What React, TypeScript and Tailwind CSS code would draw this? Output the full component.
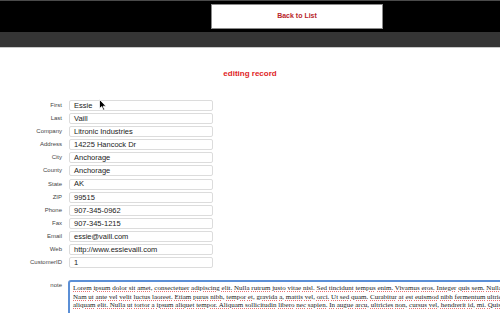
import React from 'react';

const FIELDS: [string, string][] = [
  ['First', 'Essie'],
  ['Last', 'Vaill'],
  ['Company', 'Litronic Industries'],
  ['Address', '14225 Hancock Dr'],
  ['City', 'Anchorage'],
  ['County', 'Anchorage'],
  ['State', 'AK'],
  ['ZIP', '99515'],
  ['Phone', '907-345-0962'],
  ['Fax', '907-345-1215'],
  ['Email', 'essie@vaill.com'],
  ['Web', 'http://www.essievaill.com'],
  ['CustomerID', '1'],
];

const NOTE_LINES = [
  'Lorem ipsum dolor sit amet, consectetuer adipiscing elit. Nulla rutrum justo vitae nisl. Sed tincidunt tempus enim. Vivamus eros. Integer quis sem. Nulla dictum',
  'Nam ut ante vel velit luctus laoreet. Etiam purus nibh, tempor et, gravida a, mattis vel, orci. Ut sed quam. Curabitur at est euismod nibh fermentum ultricies',
  'aliquam elit. Nulla ut tortor a ipsum aliquet tempor. Aliquam sollicitudin libero nec sapien. In augue arcu, ultricies non, cursus vel, hendrerit id, mi. Quisque',
];

function NoteLine({ text }: { text: string }) {
  const words = text.split(' ');
  return (
    <div className="whitespace-nowrap">
      {words.map((w, i) => (
        <React.Fragment key={i}>
          <span className="underline decoration-dotted decoration-[#e87070] underline-offset-1">{w}</span>
          {i < words.length - 1 ? ' ' : ''}
        </React.Fragment>
      ))}
    </div>
  );
}

export default function App() {
  return (
    <div className="relative w-[500px] h-[313px] overflow-hidden bg-white font-['Liberation_Sans',Arial,sans-serif]">
      {/* top bar */}
      <div className="h-[32px] bg-black border-t border-[#4a4a4a] pt-[3px] pl-[211px]">
        <div className="w-[172px] h-[25px] bg-white border border-[#8a8a8a] flex items-center justify-center">
          <span className="text-[7px] font-bold text-[#b8262a]">Back to List</span>
        </div>
      </div>
      <div className="h-[16px] bg-[#353535] border-b border-[#c8c8c8]" />

      <div className="pt-[21px] text-center text-[8px] font-bold text-[#e02424] leading-[10px]">editing record</div>

      {/* form */}
      <div className="mt-[21px] flex flex-col gap-[2.1px]">
        {FIELDS.map(([label, value]) => (
          <div key={label} className="flex items-center">
            <div className="w-[62px] shrink-0 text-right text-[6px] text-[#444]">{label}</div>
            <div className="ml-[7px] w-[144px] h-[11px] border border-[#dcdcdc] rounded-[2px] pl-[4px] flex items-center text-[7.5px] text-[#222]">
              {value}
            </div>
          </div>
        ))}
      </div>

      <div className="mt-[12px] flex items-start">
        <div className="w-[62px] shrink-0 text-right text-[6px] text-[#444] pt-[1px]">note</div>
        <div className="ml-[6px] w-[600px] shrink-0 h-[60px] border-2 border-[#5b8fd6] rounded-[3px] pl-[3px] pt-[2px] text-[7px] leading-[8.5px] text-[#222] font-['Liberation_Serif','Times_New_Roman',serif] overflow-hidden">
          {NOTE_LINES.map((l, i) => (
            <NoteLine key={i} text={l} />
          ))}
        </div>
      </div>

      {/* mouse pointer */}
      <svg className="absolute left-[99px] top-[99px]" width="8" height="12" viewBox="0 0 8 12">
        <path d="M0.5 0.5 L0.5 9.5 L2.7 7.6 L4.3 11.2 L5.6 10.6 L4.1 7.2 L7 7.2 Z" fill="#000" stroke="#fff" strokeWidth="0.8" />
      </svg>
    </div>
  );
}
